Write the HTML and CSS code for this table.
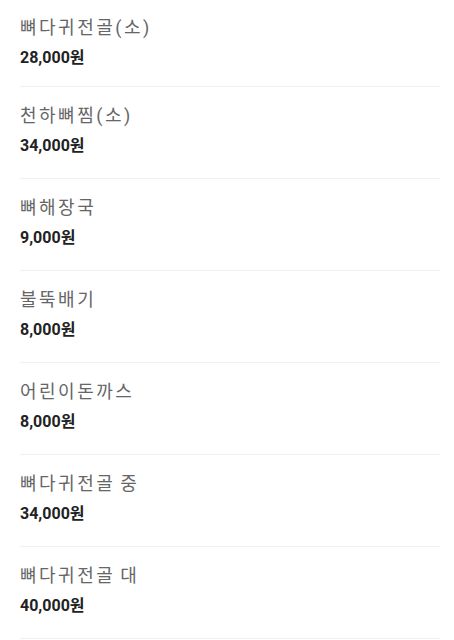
FILE: index.html
```html
<!DOCTYPE html>
<html lang="ko">
<head>
<meta charset="utf-8">
<link rel="stylesheet" href="styles.css">
</head>
<body>
<ul class="menu">
  <li class="item"><div class="name">뼈다귀전골(소)</div><div class="price">28,000원</div></li>
  <li class="item"><div class="name">천하뼈찜(소)</div><div class="price">34,000원</div></li>
  <li class="item"><div class="name">뼈해장국</div><div class="price">9,000원</div></li>
  <li class="item"><div class="name">불뚝배기</div><div class="price">8,000원</div></li>
  <li class="item"><div class="name">어린이돈까스</div><div class="price">8,000원</div></li>
  <li class="item"><div class="name">뼈다귀전골 중</div><div class="price">34,000원</div></li>
  <li class="item"><div class="name">뼈다귀전골 대</div><div class="price">40,000원</div></li>
</ul>
</body>
</html>
```
FILE: styles.css
```css
html, body {
  margin: 0;
  padding: 0;
  background: #fff;
}
.menu {
  list-style: none;
  margin: 0;
  padding: 0 14px 0 20px;
}
.item {
  height: 91px;
  border-bottom: 1px solid #f0f0f0;
  box-sizing: content-box;
  display: flex;
  flex-direction: column;
}
.item:first-child {
  height: 86px;
}
.name {
  margin-top: 18px;
  font-family: Roboto, "Noto Sans CJK KR", sans-serif;
  font-size: 18px;
  line-height: 22px;
  letter-spacing: 2.5px;
  word-spacing: -2px;
  color: #666;
}
.item:first-child .name {
  margin-top: 17px;
}
.price {
  margin-top: 9px;
  font-family: Roboto, "Noto Sans CJK KR", sans-serif;
  font-weight: 700;
  font-size: 16px;
  line-height: 20px;
  color: #222;
}
```
